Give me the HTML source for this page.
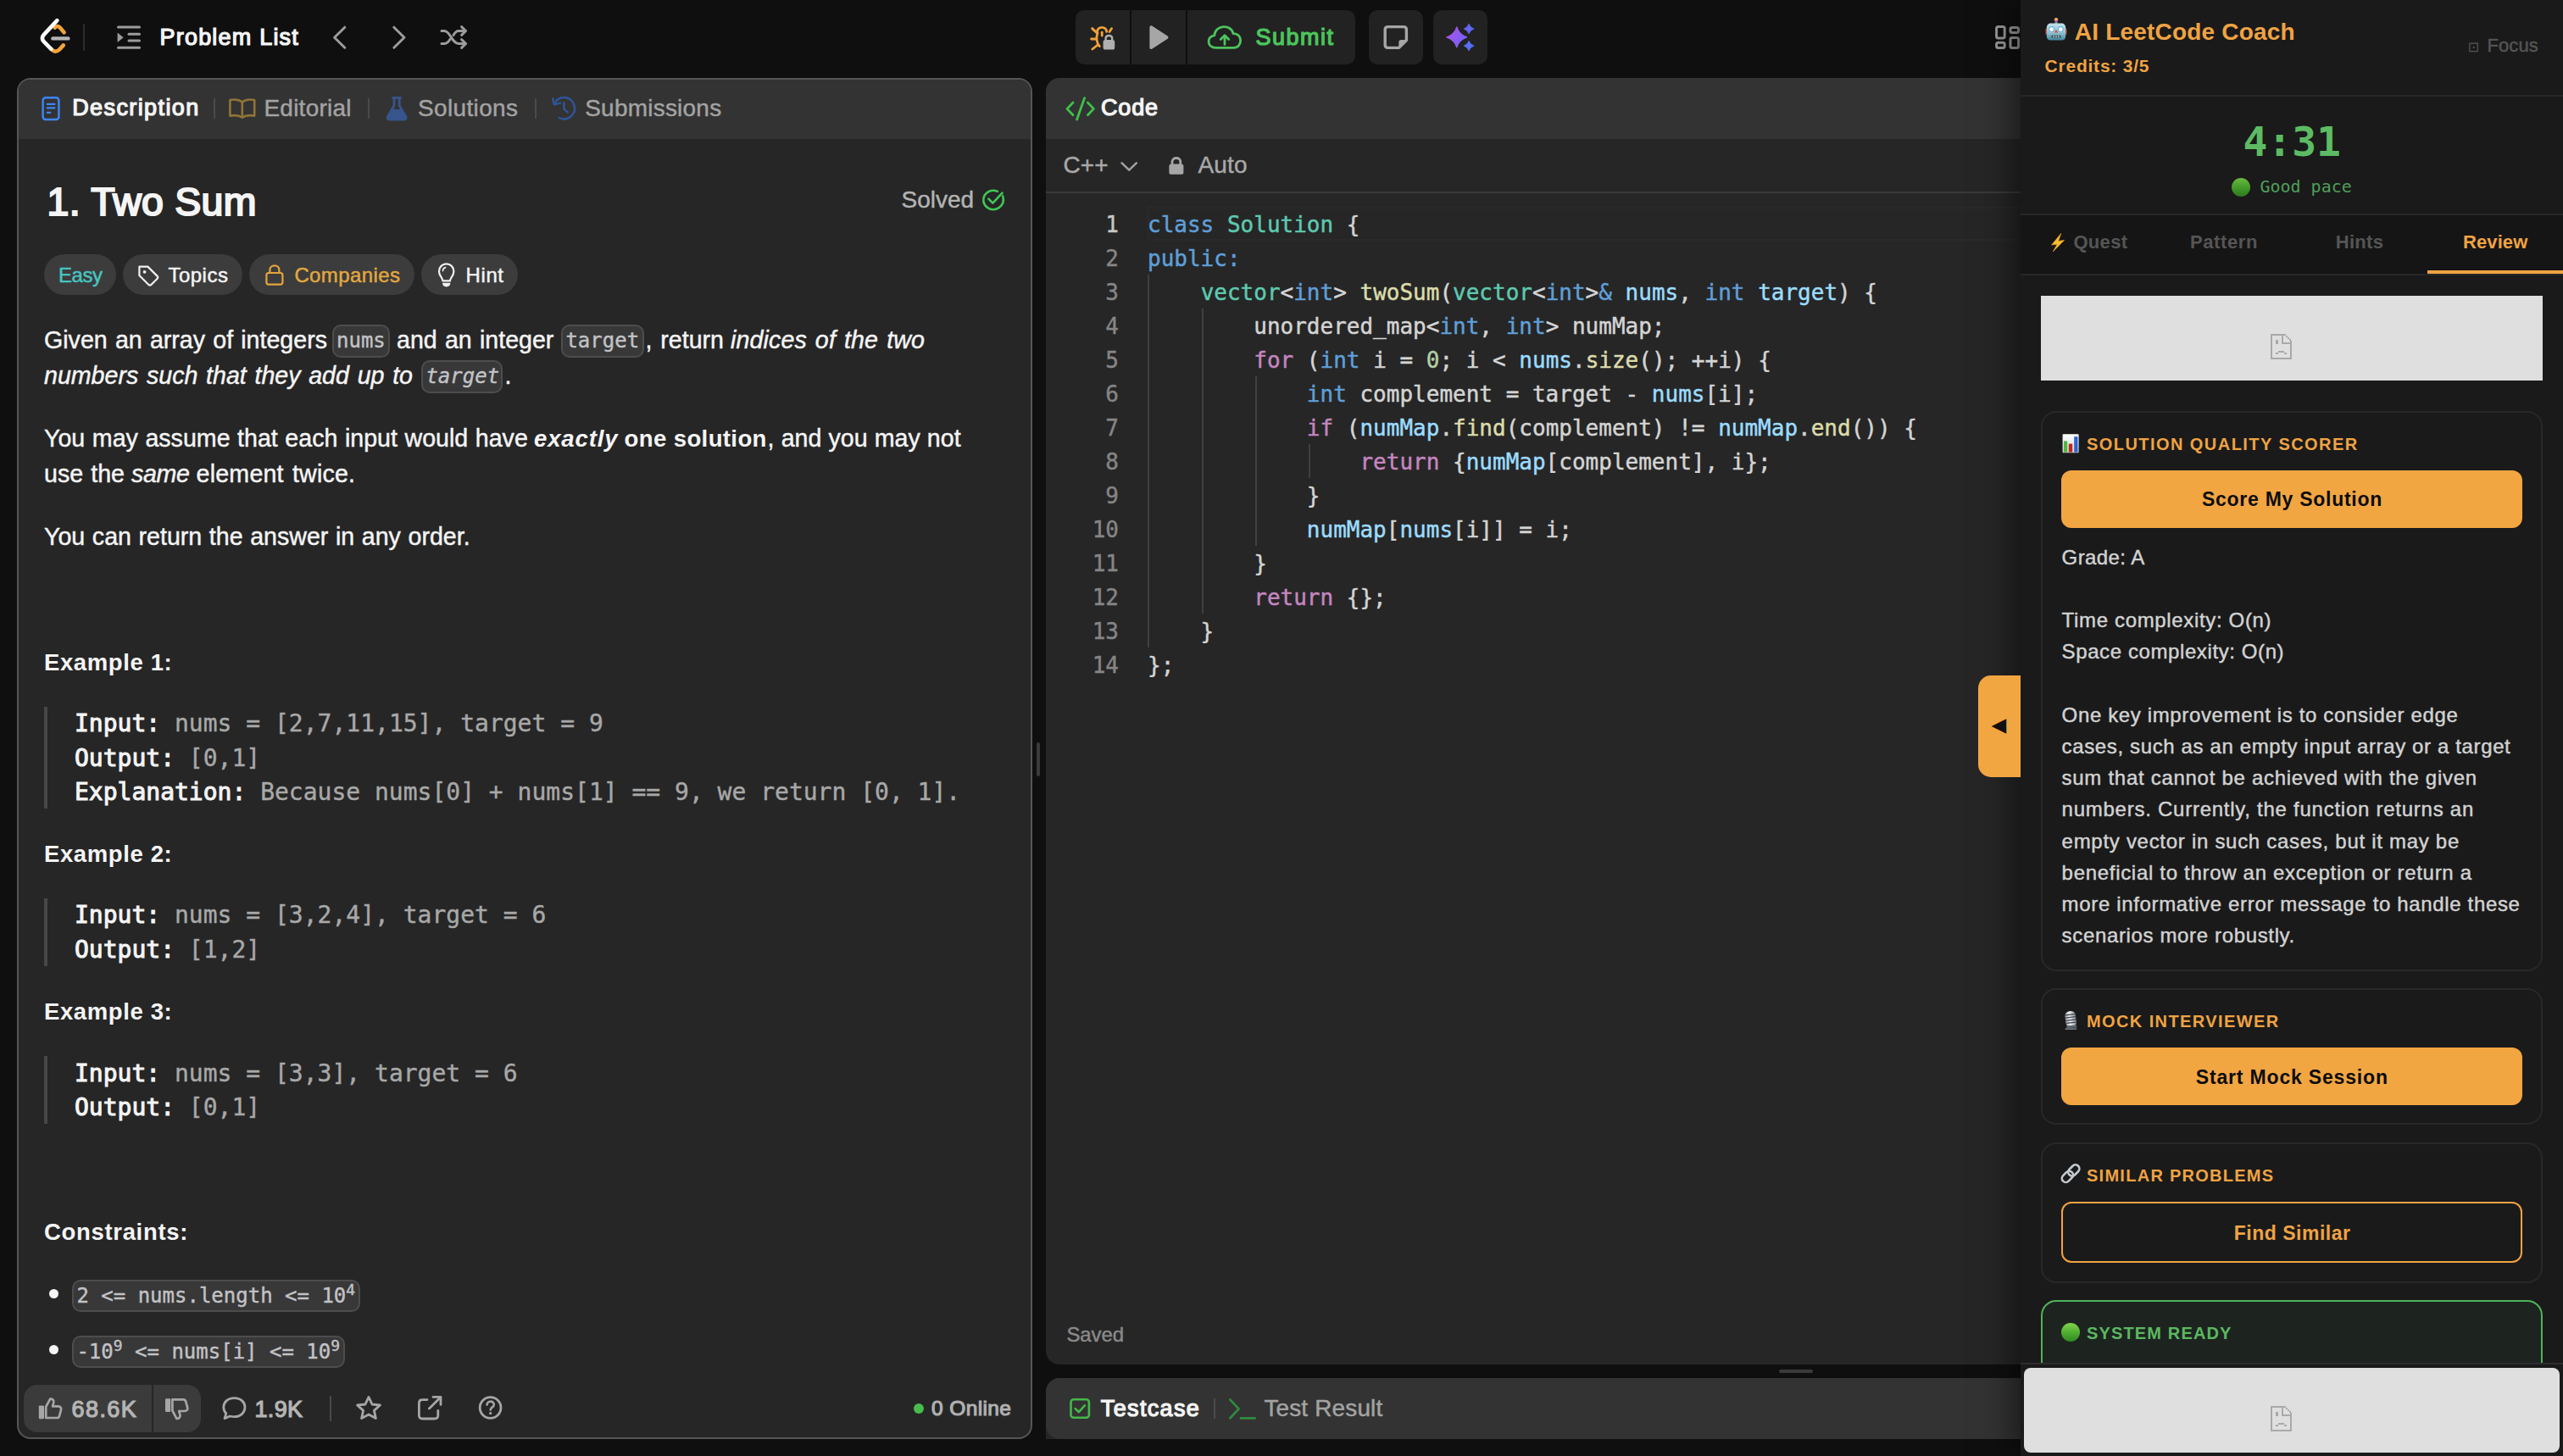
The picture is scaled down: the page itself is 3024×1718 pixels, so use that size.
<!DOCTYPE html>
<html lang="en"><head><meta charset="utf-8"><title>Two Sum - LeetCode</title>
<style>
html,body{margin:0;padding:0;background:#0f0f0f;}
body{width:3024px;height:1718px;position:relative;overflow:hidden;font-family:"Liberation Sans",sans-serif;}
.b{position:absolute;box-sizing:border-box;display:block;}
.t{position:absolute;white-space:pre;line-height:1;margin:0;padding:0;}
.s{font-family:"Liberation Sans",sans-serif;}
.m{font-family:"DejaVu Sans Mono","Liberation Mono",monospace;}
.d{font-family:"DejaVu Sans","Liberation Sans",sans-serif;}
</style></head><body>

<header class="topbar">
<svg class="b" style="left:44px;top:18px;" width="44" height="48" viewBox="44 18 44 48" fill="none">
<path d="M60.3 57.8 Q65.2 63.2 70.2 58.4 L74.8 53.4" stroke="#f2a33a" stroke-width="4.6" stroke-linecap="round"/>
<path d="M64.6 32.6 Q67.6 29.4 70.8 32.6 L75.6 38.2" stroke="#f2a33a" stroke-width="4.6" stroke-linecap="round"/>
<path d="M67.4 24.2 L51.8 40.8 Q48 45 51.8 49.2 L60.3 57.8" stroke="#ffffff" stroke-width="4.6" stroke-linecap="round" stroke-linejoin="round"/>
<path d="M62.4 45.4 H80.4" stroke="#b3b3b3" stroke-width="4.4" stroke-linecap="round"/>
</svg>
<div class="b" style="left:98px;top:28px;width:2px;height:32px;background:#2c2c2c;"></div>
<svg class="b" style="left:136px;top:28px;" width="32" height="32" viewBox="136 28 32 32" fill="none">
<g stroke="#9c9c9c" stroke-width="3" stroke-linecap="round"><path d="M139.5 32H164.5"/><path d="M152 40.3H164.5"/><path d="M152 48.1H164.5"/><path d="M139.5 56.2H164.5"/></g>
<path d="M138.6 38.4 L145.6 44.2 L138.6 50 Z" fill="#9c9c9c"/>
</svg>
<svg class="b" style="left:388px;top:26px;" width="24" height="36" viewBox="388 26 24 36" fill="none"><path d="M406.8 32.2 L394.6 44.2 L406.8 56.2" stroke="#9c9c9c" stroke-width="3" stroke-linecap="round" stroke-linejoin="round"/></svg>
<svg class="b" style="left:458px;top:26px;" width="24" height="36" viewBox="458 26 24 36" fill="none"><path d="M464.8 32.2 L477 44.2 L464.8 56.2" stroke="#9c9c9c" stroke-width="3" stroke-linecap="round" stroke-linejoin="round"/></svg>
<svg class="b" style="left:516px;top:26px;" width="40" height="36" viewBox="516 26 40 36" fill="none"><g stroke="#9c9c9c" stroke-width="3" stroke-linecap="round" stroke-linejoin="round">
<path d="M521 36.5 H524.5 C531 36.5 533.5 51.5 541 51.5 H549"/>
<path d="M521 51.5 H524.5 C528 51.5 529.6 48.6 531 46.4"/>
<path d="M535 41.4 C536.5 38.8 538 36.5 541 36.5 H549"/>
<path d="M544.6 31.6 L549.6 36.5 L544.6 41.4"/><path d="M544.6 46.6 L549.6 51.5 L544.6 56.4"/></g></svg>
<div class="b" style="left:1269px;top:12px;width:64px;height:64px;background:#222222;border-radius:10px 0 0 10px;"></div>
<div class="b" style="left:1335px;top:12px;width:64px;height:64px;background:#222222;"></div>
<div class="b" style="left:1401px;top:12px;width:198px;height:64px;background:#222222;border-radius:0 10px 10px 0;"></div>
<div class="b" style="left:1615px;top:12px;width:64px;height:64px;background:#222222;border-radius:10px;"></div>
<div class="b" style="left:1691px;top:12px;width:64px;height:64px;background:#222222;border-radius:10px;"></div>
<svg class="b" style="left:1284px;top:28px;" width="36" height="34" viewBox="1284 28 36 34" fill="none">
<g stroke="#f2a33a" stroke-width="2.8" stroke-linecap="round" fill="none">
<path d="M1294.6 37.4 C1294.6 30.6 1305.6 30.6 1305.6 37.4"/>
<path d="M1295 39 C1293 44 1293.6 50.6 1297.4 54.6"/>
<path d="M1300.2 38.2 V42"/>
<path d="M1288.6 33.6 L1293.8 38.4"/><path d="M1311.6 33.6 L1309 37.6"/>
<path d="M1287.6 46 H1293.4"/>
<path d="M1288.8 58 L1295.2 53"/>
</g>
<rect x="1301.6" y="47" width="13.6" height="11.6" rx="2.6" fill="#b0b0b0"/>
<path d="M1304.6 47.6 V45.4 C1304.6 40.8 1312.2 40.8 1312.2 45.4 V47.6" stroke="#b0b0b0" stroke-width="2.4" fill="none"/>
</svg>
<svg class="b" style="left:1350px;top:26px;" width="34" height="36" viewBox="1350 26 34 36" fill="none"><path d="M1356.4 32.4 C1356.4 30.6 1358.2 29.8 1359.6 30.8 L1377.6 42.6 C1378.8 43.4 1378.8 45 1377.6 45.8 L1359.6 57.6 C1358.2 58.6 1356.4 57.8 1356.4 56 Z" fill="#a6a6a6"/></svg>
<svg class="b" style="left:1420px;top:26px;" width="50" height="36" viewBox="1420 26 50 36" fill="none"><g stroke="#4cc45c" stroke-width="2.8" stroke-linecap="round" stroke-linejoin="round" fill="none">
<path d="M1434.6 56.4 C1423.6 56.4 1423.4 42.6 1432.8 41.8 C1433.6 29.2 1452.6 28 1455 39.6 C1466.4 39 1466.6 56.4 1455.4 56.4 Z"/>
<path d="M1445 52.4 V42.6"/><path d="M1440.2 46.6 L1445 41.8 L1449.8 46.6"/></g></svg>
<svg class="b" style="left:1628px;top:26px;" width="38" height="36" viewBox="1628 26 38 36" fill="none"><path d="M1637.6 31.6 H1656 C1658 31.6 1659.4 33 1659.4 35 V47.6 L1650.6 56.4 H1637.6 C1635.6 56.4 1634.2 55 1634.2 53 V35 C1634.2 33 1635.6 31.6 1637.6 31.6 Z" stroke="#a6a6a6" stroke-width="3.4" stroke-linejoin="round" fill="none"/>
<path d="M1660.4 47 H1653 C1651.4 47 1650.4 48 1650.4 49.6 V57 Z" fill="#a6a6a6"/></svg>
<svg class="b" style="left:1702px;top:24px;" width="42" height="40" viewBox="1702 24 42 40" fill="none"><defs><linearGradient id="spk" x1="1706" y1="36" x2="1732" y2="52" gradientUnits="userSpaceOnUse"><stop offset="0" stop-color="#b052e8"/><stop offset="0.55" stop-color="#8a5cf0"/><stop offset="1" stop-color="#6a63f5"/></linearGradient><linearGradient id="spk2" x1="1727" y1="0" x2="1739" y2="0" gradientUnits="userSpaceOnUse"><stop offset="0" stop-color="#7a5ef0"/><stop offset="1" stop-color="#4f6df5"/></linearGradient></defs>
<path d="M1718.8 31.6 Q1721.8 40.9 1731.1 43.9 Q1721.8 46.9 1718.8 56.2 Q1715.8 46.9 1706.5 43.9 Q1715.8 40.9 1718.8 31.6 Z" fill="url(#spk)" stroke="url(#spk)" stroke-width="1" stroke-linejoin="round"/>
<path d="M1733.1 28.0 Q1734.5 32.6 1739.1 34.0 Q1734.5 35.4 1733.1 40.0 Q1731.7 35.4 1727.1 34.0 Q1731.7 32.6 1733.1 28.0 Z" fill="url(#spk2)" stroke="url(#spk2)" stroke-width="0.8" stroke-linejoin="round"/>
<path d="M1733.1 48.1 Q1734.5 52.7 1739.1 54.1 Q1734.5 55.5 1733.1 60.1 Q1731.7 55.5 1727.1 54.1 Q1731.7 52.7 1733.1 48.1 Z" fill="#5570f5" stroke="#5570f5" stroke-width="0.8" stroke-linejoin="round"/></svg>
<svg class="b" style="left:2350px;top:26px;" width="40" height="36" viewBox="2350 26 40 36" fill="none"><g stroke="#9c9c9c" stroke-width="3" fill="none"><rect x="2355.6" y="31.6" width="9.6" height="13.4" rx="2"/><rect x="2355.6" y="50.2" width="9.6" height="6.4" rx="2"/><rect x="2372" y="32.4" width="9.6" height="6" rx="2"/><rect x="2372" y="44.6" width="9.6" height="12" rx="2"/></g></svg>
<span id="problist" class="t s" style="left:188.5px;top:30.74px;font-size:27px;color:#f5f5f5;-webkit-text-stroke:1.24px currentColor;letter-spacing:1.203px;">Problem List</span>
<span id="submit" class="t s" style="left:1481.6px;top:30.84px;font-size:27px;color:#4cc45c;-webkit-text-stroke:1.24px currentColor;letter-spacing:1.492px;">Submit</span>
</header>
<main class="panel description">
<div class="b" style="left:20px;top:92px;width:1198px;height:1606px;background:#262626;border-radius:16px;border:2px solid #565656;overflow:hidden;"></div>
<div class="b" style="left:22px;top:94px;width:1194px;height:70px;background:#333333;border-radius:14px 14px 0 0;"></div>
<svg class="b" style="left:48px;top:112px;" width="26" height="32" viewBox="48 112 26 32" fill="none"><rect x="50.6" y="115.2" width="18.8" height="25.8" rx="3.2" stroke="#3d86f6" stroke-width="2.4" fill="none"/>
<g stroke="#3d86f6" stroke-width="2.3" stroke-linecap="round"><path d="M55.8 122.9H64.4"/><path d="M55.8 127.4H64.4"/><path d="M55.8 132.8H59.2"/></g></svg>
<div class="b" style="left:252px;top:116px;width:2px;height:24px;background:#4a4a4a;"></div>
<svg class="b" style="left:268px;top:112px;" width="36" height="32" viewBox="268 112 36 32" fill="none"><g stroke="#8f7438" stroke-width="2.6" stroke-linejoin="round" stroke-linecap="round" fill="none">
<path d="M285.8 120.4 C282 117.4 276 117.2 271.4 118 V136.6 C276 135.8 282 136 285.8 138.6 C289.6 136 295.6 135.8 300.2 136.6 V118 C295.6 117.2 289.6 117.4 285.8 120.4 Z"/><path d="M285.8 120.4 V138.2"/></g></svg>
<div class="b" style="left:434px;top:116px;width:2px;height:24px;background:#4a4a4a;"></div>
<svg class="b" style="left:452px;top:112px;" width="32" height="32" viewBox="452 112 32 32" fill="none"><path d="M463.6 115.4 H472.6 M465 115.4 V124.6 L457.6 137.2 C456.4 139.4 457.6 141 459.8 141 H476.4 C478.6 141 479.8 139.4 478.6 137.2 L471.2 124.6 V115.4" stroke="#37548c" stroke-width="2.8" stroke-linecap="round" stroke-linejoin="round" fill="none"/>
<path d="M462.4 129 L458 137 C457 139 458 140.4 460 140.4 H476.2 C478.2 140.4 479.2 139 478.2 137 L473.8 129 Z" fill="#37548c"/></svg>
<div class="b" style="left:631px;top:116px;width:2px;height:24px;background:#4a4a4a;"></div>
<svg class="b" style="left:648px;top:110px;" width="36" height="36" viewBox="648 110 36 36" fill="none"><g stroke="#2f5598" stroke-width="2.5" stroke-linecap="round" stroke-linejoin="round" fill="none">
<path d="M654.6 122.4 C658 112.6 672.4 112.6 676.8 122.4 C681.6 133.6 670.6 144.4 659.6 139"/>
<path d="M652.2 116.4 L654 123.4 L661 121.6"/>
<path d="M665.4 121.4 V128.6 L669.6 132.2"/></g></svg>
<svg class="b" style="left:1156px;top:220px;" width="32" height="32" viewBox="1156 220 32 32" fill="none"><g stroke="#3fc755" stroke-width="2.6" stroke-linecap="round" stroke-linejoin="round" fill="none">
<path d="M1183.2 231.4 C1186.6 243.4 1173.6 251.6 1164.6 244.6 C1154.6 236.6 1163 220.6 1176.8 225.8"/>
<path d="M1166.4 234.6 L1171.4 239.6 L1182.6 227.6"/></g></svg>
<div class="b" style="left:52px;top:300px;width:85px;height:48px;background:#3c3c3c;border-radius:24px;"></div>
<div class="b" style="left:145px;top:300px;width:141px;height:48px;background:#3c3c3c;border-radius:24px;"></div>
<svg class="b" style="left:160px;top:310px;" width="30" height="30" viewBox="160 310 30 30" fill="none"><path d="M164.4 314.6 H174.4 L185.4 325.6 C186.4 326.6 186.4 328 185.4 329 L178.6 335.8 C177.6 336.8 176.2 336.8 175.2 335.8 L164.4 325 Z" stroke="#f0f0f0" stroke-width="2.2" stroke-linejoin="round" fill="none"/><circle cx="170.6" cy="320.8" r="1.9" fill="#f0f0f0"/></svg>
<div class="b" style="left:294px;top:300px;width:195px;height:48px;background:#3c3c3c;border-radius:24px;"></div>
<svg class="b" style="left:310px;top:308px;" width="28" height="32" viewBox="310 308 28 32" fill="none"><rect x="314.4" y="322" width="19" height="13.6" rx="2.6" stroke="#e3a53a" stroke-width="2.2" fill="none"/><path d="M318.4 321.6 V318.4 C318.4 311.6 329.4 311.6 329.4 318.4 V321.6" stroke="#e3a53a" stroke-width="2.2" fill="none"/></svg>
<div class="b" style="left:497px;top:300px;width:114px;height:48px;background:#3c3c3c;border-radius:24px;"></div>
<svg class="b" style="left:512px;top:306px;" width="30" height="36" viewBox="512 306 30 36" fill="none"><path d="M522.4 331.4 C522.4 327.4 518 325.8 518 320.2 C518 315 521.8 311.4 526.7 311.4 C531.6 311.4 535.4 315 535.4 320.2 C535.4 325.8 531 327.4 531 331.4 Z" stroke="#f0f0f0" stroke-width="2.2" stroke-linejoin="round" fill="none"/><path d="M522 333.8 H531.4 C531.4 336.8 529.4 338.4 526.7 338.4 C524 338.4 522 336.8 522 333.8 Z" fill="#f0f0f0"/><path d="M522.4 319.6 C522.6 317.4 523.8 316 525.6 315.6" stroke="#f0f0f0" stroke-width="1.6" stroke-linecap="round" fill="none"/></svg>
<div class="b" style="left:392px;top:383px;width:68px;height:39px;background:#383838;border-radius:10px;border:2px solid #4d4d4d;"></div>
<div class="b" style="left:662px;top:383px;width:98px;height:39px;background:#383838;border-radius:10px;border:2px solid #4d4d4d;"></div>
<div class="b" style="left:497px;top:425px;width:96px;height:39px;background:#383838;border-radius:10px;border:2px solid #4d4d4d;"></div>
<div class="b" style="left:52px;top:834px;width:4px;height:120px;background:#474747;"></div>
<div class="b" style="left:52px;top:1060px;width:4px;height:80px;background:#474747;"></div>
<div class="b" style="left:52px;top:1246px;width:4px;height:80px;background:#474747;"></div>
<div class="b" style="left:58px;top:1521px;width:11px;height:11px;border-radius:50%;background:#f5f5f5"></div>
<div class="b" style="left:85px;top:1510px;width:340px;height:38px;background:#383838;border-radius:10px;border:2px solid #4d4d4d;"></div>
<div class="b" style="left:58px;top:1587px;width:11px;height:11px;border-radius:50%;background:#f5f5f5"></div>
<div class="b" style="left:85px;top:1576px;width:322px;height:38px;background:#383838;border-radius:10px;border:2px solid #4d4d4d;"></div>
<div class="b" style="left:28px;top:1634px;width:151px;height:56px;background:#3b3b3b;border-radius:16px 0 0 16px;"></div>
<div class="b" style="left:181px;top:1634px;width:56px;height:56px;background:#3b3b3b;border-radius:0 16px 16px 0;"></div>
<svg class="b" style="left:44px;top:1646px;" width="32" height="32" viewBox="0 0 32 32" fill="none"><g transform="translate(1.6,3)"><path d="M8.6 24 V11 L13.6 1.6 C16.8 1.2 18.4 3.6 17.6 6.4 L16.4 10.4 H23 C25.6 10.4 27 12.4 26.4 14.6 L24.4 21.8 C24 23.2 22.8 24 21.4 24 Z" stroke="#a6a6a6" stroke-width="2.7" stroke-linejoin="round" fill="none"/><rect x="0.2" y="9.4" width="6.2" height="15.8" rx="1.2" fill="#a6a6a6"/></g></svg>
<svg class="b" style="left:192px;top:1646px;" width="34" height="32" viewBox="0 0 34 32" fill="none"><g transform="translate(2.8,29.4) scale(1,-1)"><path d="M8.6 24 V11 L13.6 1.6 C16.8 1.2 18.4 3.6 17.6 6.4 L16.4 10.4 H23 C25.6 10.4 27 12.4 26.4 14.6 L24.4 21.8 C24 23.2 22.8 24 21.4 24 Z" stroke="#a6a6a6" stroke-width="2.7" stroke-linejoin="round" fill="none"/><rect x="0.2" y="9.4" width="6.2" height="15.8" rx="1.2" fill="#a6a6a6"/></g></svg>
<svg class="b" style="left:260px;top:1646px;" width="34" height="32" viewBox="260 1646 34 32" fill="none"><path d="M276.4 1649.6 C268.6 1649.6 263.8 1654.6 263.8 1660.6 C263.8 1663.6 265 1666 266.8 1667.8 L265 1673.6 L271.4 1671 C273 1671.4 274.6 1671.6 276.4 1671.6 C284.2 1671.6 289 1666.6 289 1660.6 C289 1654.6 284.2 1649.6 276.4 1649.6 Z" stroke="#a6a6a6" stroke-width="2.8" stroke-linejoin="round" fill="none"/></svg>
<div class="b" style="left:389px;top:1647px;width:2px;height:30px;background:#4a4a4a;"></div>
<svg class="b" style="left:418px;top:1644px;" width="34" height="34" viewBox="418 1644 34 34" fill="none"><path d="M435 1648.4 L439 1657 L448.4 1658 L441.4 1664.4 L443.4 1673.6 L435 1669 L426.6 1673.6 L428.6 1664.4 L421.6 1658 L431 1657 Z" stroke="#a6a6a6" stroke-width="2.8" stroke-linejoin="round" fill="none"/></svg>
<svg class="b" style="left:490px;top:1644px;" width="34" height="34" viewBox="490 1644 34 34" fill="none"><g stroke="#a6a6a6" stroke-width="2.8" stroke-linecap="round" stroke-linejoin="round" fill="none"><path d="M504 1651.6 H498.4 C496 1651.6 494.4 1653.2 494.4 1655.6 V1670 C494.4 1672.4 496 1674 498.4 1674 H512.8 C515.2 1674 516.8 1672.4 516.8 1670 V1664.4"/><path d="M511 1648.4 H520 V1657.4"/><path d="M519.4 1649 L506.4 1662"/></g></svg>
<svg class="b" style="left:562px;top:1644px;" width="34" height="34" viewBox="562 1644 34 34" fill="none"><circle cx="578.6" cy="1661" r="12.4" stroke="#a6a6a6" stroke-width="2.8" fill="none"/>
<path d="M574.6 1657.6 C574.6 1652.4 582.8 1652.4 582.8 1657.4 C582.8 1660.4 578.7 1660.4 578.7 1663.6" stroke="#a6a6a6" stroke-width="2.6" stroke-linecap="round" fill="none"/><circle cx="578.7" cy="1667.6" r="1.7" fill="#a6a6a6"/></svg>
<div class="b" style="left:1078px;top:1656px;width:12px;height:12px;border-radius:50%;background:#47bd4c"></div>
<div class="b" style="left:1223px;top:876px;width:4px;height:40px;background:#3a3a3a;border-radius:2px;"></div>
<span id="tab_desc" class="t s" style="left:85.2px;top:114.34px;font-size:27px;color:#f5f5f5;-webkit-text-stroke:1.24px currentColor;letter-spacing:1.403px;">Description</span>
<span id="tab_edit" class="t s" style="left:311.4px;top:113.50px;font-size:28px;color:#a3a3a3;-webkit-text-stroke:0.45px currentColor;letter-spacing:0.248px;">Editorial</span>
<span id="tab_sol" class="t s" style="left:493px;top:113.50px;font-size:28px;color:#a3a3a3;-webkit-text-stroke:0.45px currentColor;letter-spacing:0.357px;">Solutions</span>
<span id="tab_sub" class="t s" style="left:690.2px;top:113.50px;font-size:28px;color:#a3a3a3;-webkit-text-stroke:0.45px currentColor;letter-spacing:0.224px;">Submissions</span>
<span id="title" class="t s" style="left:55.6px;top:215.04px;font-size:46.5px;color:#f5f5f5;-webkit-text-stroke:2.14px currentColor;letter-spacing:0.233px;">1. Two Sum</span>
<span id="solved" class="t s" style="left:1063.6px;top:222.10px;font-size:28px;color:#b3b3b3;-webkit-text-stroke:0.45px currentColor;letter-spacing:-0.037px;">Solved</span>
<span id="easy" class="t s" style="left:69px;top:312.68px;font-size:24px;color:#46c6c2;-webkit-text-stroke:0.45px currentColor;letter-spacing:-0.490px;">Easy</span>
<span id="topics" class="t s" style="left:198.4px;top:312.68px;font-size:24px;color:#f5f5f5;-webkit-text-stroke:0.45px currentColor;letter-spacing:0.495px;">Topics</span>
<span id="companies" class="t s" style="left:347.4px;top:312.68px;font-size:24px;color:#e3a840;-webkit-text-stroke:0.45px currentColor;letter-spacing:0.399px;">Companies</span>
<span id="hint" class="t s" style="left:549.6px;top:312.68px;font-size:24px;color:#f5f5f5;-webkit-text-stroke:0.45px currentColor;letter-spacing:0.578px;">Hint</span>
<span id="p1a" class="t s" style="left:52px;top:386.99px;font-size:28.6px;color:#f5f5f5;-webkit-text-stroke:0.45px currentColor;word-spacing:1.250px;">Given an array of integers</span>
<span id="p1nums" class="t m" style="left:397px;top:389.70px;font-size:24px;color:#c2c2c6;-webkit-text-stroke:0.4px currentColor;">nums</span>
<span id="p1b" class="t s" style="left:468px;top:386.99px;font-size:28.6px;color:#f5f5f5;-webkit-text-stroke:0.45px currentColor;word-spacing:1.278px;">and an integer</span>
<span id="p1tgt" class="t m" style="left:667.4px;top:389.70px;font-size:24px;color:#c2c2c6;-webkit-text-stroke:0.4px currentColor;">target</span>
<span id="p1c" class="t s" style="left:761.6px;top:386.99px;font-size:28.6px;color:#f5f5f5;-webkit-text-stroke:0.45px currentColor;word-spacing:1.806px;">, return</span>
<span id="p1d" class="t s" style="left:862px;top:386.99px;font-size:28.6px;color:#f5f5f5;-webkit-text-stroke:0.45px currentColor;font-style:italic;word-spacing:2.000px;letter-spacing:0.115px;">indices of the two</span>
<span id="p1e" class="t s" style="left:52px;top:428.99px;font-size:28.6px;color:#f5f5f5;-webkit-text-stroke:0.45px currentColor;font-style:italic;word-spacing:1.763px;">numbers such that they add up to</span>
<span id="p1tgt2" class="t m" style="left:502.4px;top:431.70px;font-size:24px;color:#c2c2c6;font-style:italic;-webkit-text-stroke:0.4px currentColor;">target</span>
<span id="p1f" class="t s" style="left:595.6px;top:428.99px;font-size:28.6px;color:#f5f5f5;-webkit-text-stroke:0.45px currentColor;">.</span>
<span id="p2a" class="t s" style="left:52px;top:503.19px;font-size:28.6px;color:#f5f5f5;-webkit-text-stroke:0.45px currentColor;word-spacing:0.625px;">You may assume that each input would have</span>
<span id="p2b" class="t s" style="left:630px;top:504.04px;font-size:27.6px;color:#f5f5f5;font-weight:700;font-style:italic;letter-spacing:0.829px;">exactly</span>
<span id="p2c" class="t s" style="left:736.6px;top:504.04px;font-size:27.6px;color:#f5f5f5;font-weight:700;letter-spacing:0.349px;">one solution</span>
<span id="p2d" class="t s" style="left:905.6px;top:503.19px;font-size:28.6px;color:#f5f5f5;-webkit-text-stroke:0.45px currentColor;word-spacing:0.172px;">, and you may not</span>
<span id="p2e" class="t s" style="left:52px;top:545.19px;font-size:28.6px;color:#f5f5f5;-webkit-text-stroke:0.45px currentColor;word-spacing:1.203px;">use the</span>
<span id="p2f" class="t s" style="left:155px;top:545.19px;font-size:28.6px;color:#f5f5f5;-webkit-text-stroke:0.45px currentColor;font-style:italic;letter-spacing:-0.330px;">same</span>
<span id="p2g" class="t s" style="left:231.6px;top:545.19px;font-size:28.6px;color:#f5f5f5;-webkit-text-stroke:0.45px currentColor;word-spacing:2.000px;letter-spacing:0.202px;">element twice.</span>
<span id="p3" class="t s" style="left:52px;top:619.39px;font-size:28.6px;color:#f5f5f5;-webkit-text-stroke:0.45px currentColor;word-spacing:0.648px;">You can return the answer in any order.</span>
<span id="ex1" class="t s" style="left:52px;top:767.92px;font-size:27.5px;color:#f5f5f5;font-weight:700;letter-spacing:0.618px;">Example 1:</span>
<span id="ex1l0" class="t m" style="left:88px;top:840.31px;font-size:28px;color:#a8a8a8;-webkit-text-stroke:0.4px currentColor;"><span style="color:#f5f5f5;-webkit-text-stroke:1px #f5f5f5">Input:</span> nums = [2,7,11,15], target = 9</span>
<span id="ex1l1" class="t m" style="left:88px;top:880.51px;font-size:28px;color:#a8a8a8;-webkit-text-stroke:0.4px currentColor;"><span style="color:#f5f5f5;-webkit-text-stroke:1px #f5f5f5">Output:</span> [0,1]</span>
<span id="ex1l2" class="t m" style="left:88px;top:920.51px;font-size:28px;color:#a8a8a8;-webkit-text-stroke:0.4px currentColor;"><span style="color:#f5f5f5;-webkit-text-stroke:1px #f5f5f5">Explanation:</span> Because nums[0] + nums[1] == 9, we return [0, 1].</span>
<span id="ex2" class="t s" style="left:52px;top:993.92px;font-size:27.5px;color:#f5f5f5;font-weight:700;letter-spacing:0.618px;">Example 2:</span>
<span id="ex2l0" class="t m" style="left:88px;top:1066.31px;font-size:28px;color:#a8a8a8;-webkit-text-stroke:0.4px currentColor;"><span style="color:#f5f5f5;-webkit-text-stroke:1px #f5f5f5">Input:</span> nums = [3,2,4], target = 6</span>
<span id="ex2l1" class="t m" style="left:88px;top:1106.51px;font-size:28px;color:#a8a8a8;-webkit-text-stroke:0.4px currentColor;"><span style="color:#f5f5f5;-webkit-text-stroke:1px #f5f5f5">Output:</span> [1,2]</span>
<span id="ex3" class="t s" style="left:52px;top:1180.32px;font-size:27.5px;color:#f5f5f5;font-weight:700;letter-spacing:0.618px;">Example 3:</span>
<span id="ex3l0" class="t m" style="left:88px;top:1252.51px;font-size:28px;color:#a8a8a8;-webkit-text-stroke:0.4px currentColor;"><span style="color:#f5f5f5;-webkit-text-stroke:1px #f5f5f5">Input:</span> nums = [3,3], target = 6</span>
<span id="ex3l1" class="t m" style="left:88px;top:1292.71px;font-size:28px;color:#a8a8a8;-webkit-text-stroke:0.4px currentColor;"><span style="color:#f5f5f5;-webkit-text-stroke:1px #f5f5f5">Output:</span> [0,1]</span>
<span id="constr" class="t s" style="left:52px;top:1440.32px;font-size:27.5px;color:#f5f5f5;font-weight:700;letter-spacing:0.671px;">Constraints:</span>
<span id="c1" class="t m" style="left:90.4px;top:1517.10px;font-size:24px;color:#c2c2c6;-webkit-text-stroke:0.4px currentColor;">2 &lt;= nums.length &lt;= 10<span style="font-size:18px;position:relative;top:-9px">4</span></span>
<span id="c2" class="t m" style="left:90.4px;top:1583.10px;font-size:24px;color:#c2c2c6;-webkit-text-stroke:0.4px currentColor;">-10<span style="font-size:18px;position:relative;top:-9px">9</span> &lt;= nums[i] &lt;= 10<span style="font-size:18px;position:relative;top:-9px">9</span></span>
<span id="likes" class="t s" style="left:84.6px;top:1649.54px;font-size:27px;color:#b4b4b4;-webkit-text-stroke:1.24px currentColor;letter-spacing:1.407px;">68.6K</span>
<span id="comments" class="t s" style="left:300.6px;top:1649.54px;font-size:27px;color:#b4b4b4;-webkit-text-stroke:1.24px currentColor;letter-spacing:0.263px;">1.9K</span>
<span id="online" class="t s" style="left:1099px;top:1650.46px;font-size:24.5px;color:#b0b0b0;-webkit-text-stroke:1.13px currentColor;letter-spacing:0.392px;">0 Online</span>
</main>
<section class="panel code">
<div class="b" style="left:1234px;top:92px;width:1770px;height:1518px;background:#262626;border-radius:16px;overflow:hidden;"></div>
<div class="b" style="left:1234px;top:92px;width:1770px;height:72px;background:#333333;border-radius:16px 16px 0 0;"></div>
<svg class="b" style="left:1254px;top:110px;" width="42" height="36" viewBox="1254 110 42 36" fill="none"><g stroke="#3cc24a" stroke-width="2.8" stroke-linecap="round" stroke-linejoin="round" fill="none">
<path d="M1266 121 L1259 128.4 L1266 135.8"/><path d="M1283.4 121 L1290.4 128.4 L1283.4 135.8"/><path d="M1279.6 115.6 L1270.6 141"/></g></svg>
<svg class="b" style="left:1318px;top:186px;" width="28" height="20" viewBox="1318 186 28 20" fill="none"><path d="M1323.6 192.4 L1332.2 200.6 L1340.8 192.4" stroke="#a0a0a0" stroke-width="2.6" stroke-linecap="round" stroke-linejoin="round" fill="none"/></svg>
<svg class="b" style="left:1376px;top:182px;" width="24" height="26" viewBox="1376 182 24 26" fill="none"><rect x="1379.4" y="193.4" width="17" height="12.4" rx="2.6" fill="#a6a6a6"/><path d="M1383 194 V191 C1383 185 1392.8 185 1392.8 191 V194" stroke="#a6a6a6" stroke-width="2.8" fill="none"/></svg>
<div class="b" style="left:1234px;top:226px;width:1770px;height:2px;background:#3a3a3a;"></div>
<div class="b" style="left:1354px;top:244px;width:1650px;height:40px;background:transparent;border:2px solid #2a2a2a;"></div>
<div class="b" style="left:1354px;top:324px;width:2px;height:440px;background:#404040;"></div>
<div class="b" style="left:1418px;top:364px;width:2px;height:360px;background:#404040;"></div>
<div class="b" style="left:1481px;top:444px;width:2px;height:200px;background:#404040;"></div>
<div class="b" style="left:1544px;top:524px;width:2px;height:40px;background:#404040;"></div>
<div class="b" style="left:2099px;top:1616px;width:40px;height:4px;background:#3a3a3a;border-radius:2px;"></div>
<span id="code_h" class="t s" style="left:1299px;top:114.34px;font-size:27px;color:#f5f5f5;-webkit-text-stroke:1.24px currentColor;letter-spacing:0.863px;">Code</span>
<span id="cpp" class="t s" style="left:1254.6px;top:181.30px;font-size:28px;color:#a8a8a8;-webkit-text-stroke:0.45px currentColor;letter-spacing:0.021px;">C++</span>
<span id="auto" class="t s" style="left:1413.4px;top:181.30px;font-size:28px;color:#a8a8a8;-webkit-text-stroke:0.45px currentColor;letter-spacing:0.198px;">Auto</span>
<span id="ln0" class="t m" style="left:1304.35px;top:251.60px;font-size:26px;color:#c6c6c6;-webkit-text-stroke:0.4px currentColor;">1</span>
<span id="cd0" class="t m" style="left:1354px;top:251.60px;font-size:26px;color:#d4d4d4;-webkit-text-stroke:0.45px currentColor;"><span style="color:#5f9fd8">class</span> <span style="color:#5ec9b0">Solution</span> {</span>
<span id="ln1" class="t m" style="left:1304.35px;top:291.60px;font-size:26px;color:#858585;-webkit-text-stroke:0.4px currentColor;">2</span>
<span id="cd1" class="t m" style="left:1354px;top:291.60px;font-size:26px;color:#d4d4d4;-webkit-text-stroke:0.45px currentColor;"><span style="color:#5f9fd8">public:</span></span>
<span id="ln2" class="t m" style="left:1304.35px;top:331.60px;font-size:26px;color:#858585;-webkit-text-stroke:0.4px currentColor;">3</span>
<span id="cd2" class="t m" style="left:1354px;top:331.60px;font-size:26px;color:#d4d4d4;-webkit-text-stroke:0.45px currentColor;">    <span style="color:#5ec9b0">vector</span>&lt;<span style="color:#5f9fd8">int</span>&gt; <span style="color:#dcdcaa">twoSum</span>(<span style="color:#5ec9b0">vector</span>&lt;<span style="color:#5f9fd8">int</span>&gt;<span style="color:#5f9fd8">&amp;</span> <span style="color:#9cdcfe">nums</span>, <span style="color:#5f9fd8">int</span> <span style="color:#9cdcfe">target</span>) {</span>
<span id="ln3" class="t m" style="left:1304.35px;top:371.60px;font-size:26px;color:#858585;-webkit-text-stroke:0.4px currentColor;">4</span>
<span id="cd3" class="t m" style="left:1354px;top:371.60px;font-size:26px;color:#d4d4d4;-webkit-text-stroke:0.45px currentColor;">        unordered_map&lt;<span style="color:#5f9fd8">int</span>, <span style="color:#5f9fd8">int</span>&gt; numMap;</span>
<span id="ln4" class="t m" style="left:1304.35px;top:411.60px;font-size:26px;color:#858585;-webkit-text-stroke:0.4px currentColor;">5</span>
<span id="cd4" class="t m" style="left:1354px;top:411.60px;font-size:26px;color:#d4d4d4;-webkit-text-stroke:0.45px currentColor;">        <span style="color:#c586c0">for</span> (<span style="color:#5f9fd8">int</span> i = <span style="color:#b5cea8">0</span>; i &lt; <span style="color:#9cdcfe">nums</span>.<span style="color:#dcdcaa">size</span>(); ++i) {</span>
<span id="ln5" class="t m" style="left:1304.35px;top:451.60px;font-size:26px;color:#858585;-webkit-text-stroke:0.4px currentColor;">6</span>
<span id="cd5" class="t m" style="left:1354px;top:451.60px;font-size:26px;color:#d4d4d4;-webkit-text-stroke:0.45px currentColor;">            <span style="color:#5f9fd8">int</span> complement = target - <span style="color:#9cdcfe">nums</span>[i];</span>
<span id="ln6" class="t m" style="left:1304.35px;top:491.60px;font-size:26px;color:#858585;-webkit-text-stroke:0.4px currentColor;">7</span>
<span id="cd6" class="t m" style="left:1354px;top:491.60px;font-size:26px;color:#d4d4d4;-webkit-text-stroke:0.45px currentColor;">            <span style="color:#c586c0">if</span> (<span style="color:#9cdcfe">numMap</span>.<span style="color:#dcdcaa">find</span>(complement) != <span style="color:#9cdcfe">numMap</span>.<span style="color:#dcdcaa">end</span>()) {</span>
<span id="ln7" class="t m" style="left:1304.35px;top:531.60px;font-size:26px;color:#858585;-webkit-text-stroke:0.4px currentColor;">8</span>
<span id="cd7" class="t m" style="left:1354px;top:531.60px;font-size:26px;color:#d4d4d4;-webkit-text-stroke:0.45px currentColor;">                <span style="color:#c586c0">return</span> {<span style="color:#9cdcfe">numMap</span>[complement], i};</span>
<span id="ln8" class="t m" style="left:1304.35px;top:571.60px;font-size:26px;color:#858585;-webkit-text-stroke:0.4px currentColor;">9</span>
<span id="cd8" class="t m" style="left:1354px;top:571.60px;font-size:26px;color:#d4d4d4;-webkit-text-stroke:0.45px currentColor;">            }</span>
<span id="ln9" class="t m" style="left:1288.7px;top:611.60px;font-size:26px;color:#858585;-webkit-text-stroke:0.4px currentColor;">10</span>
<span id="cd9" class="t m" style="left:1354px;top:611.60px;font-size:26px;color:#d4d4d4;-webkit-text-stroke:0.45px currentColor;">            <span style="color:#9cdcfe">numMap</span>[<span style="color:#9cdcfe">nums</span>[i]] = i;</span>
<span id="ln10" class="t m" style="left:1288.7px;top:651.60px;font-size:26px;color:#858585;-webkit-text-stroke:0.4px currentColor;">11</span>
<span id="cd10" class="t m" style="left:1354px;top:651.60px;font-size:26px;color:#d4d4d4;-webkit-text-stroke:0.45px currentColor;">        }</span>
<span id="ln11" class="t m" style="left:1288.7px;top:691.60px;font-size:26px;color:#858585;-webkit-text-stroke:0.4px currentColor;">12</span>
<span id="cd11" class="t m" style="left:1354px;top:691.60px;font-size:26px;color:#d4d4d4;-webkit-text-stroke:0.45px currentColor;">        <span style="color:#c586c0">return</span> {};</span>
<span id="ln12" class="t m" style="left:1288.7px;top:731.60px;font-size:26px;color:#858585;-webkit-text-stroke:0.4px currentColor;">13</span>
<span id="cd12" class="t m" style="left:1354px;top:731.60px;font-size:26px;color:#d4d4d4;-webkit-text-stroke:0.45px currentColor;">    }</span>
<span id="ln13" class="t m" style="left:1288.7px;top:771.60px;font-size:26px;color:#858585;-webkit-text-stroke:0.4px currentColor;">14</span>
<span id="cd13" class="t m" style="left:1354px;top:771.60px;font-size:26px;color:#d4d4d4;-webkit-text-stroke:0.45px currentColor;">};</span>
<span id="saved" class="t s" style="left:1258.4px;top:1563.08px;font-size:24px;color:#8a8a8a;-webkit-text-stroke:0.45px currentColor;letter-spacing:-0.093px;">Saved</span>
</section>
<section class="panel testcase">
<div class="b" style="left:1234px;top:1626px;width:1770px;height:72px;background:#262626;border-radius:16px 16px 0 0;"></div>
<div class="b" style="left:1234px;top:1626px;width:1770px;height:72px;background:#333333;border-radius:16px;"></div>
<svg class="b" style="left:1258px;top:1644px;" width="32" height="34" viewBox="1258 1644 32 34" fill="none"><rect x="1263.5" y="1651.3" width="21.4" height="21.4" rx="3.2" stroke="#45b84a" stroke-width="2.6" fill="none"/><path d="M1268.8 1662.2 L1272.8 1666.2 L1279.8 1658.4" stroke="#45b84a" stroke-width="2.6" stroke-linecap="round" stroke-linejoin="round" fill="none"/></svg>
<div class="b" style="left:1432px;top:1650px;width:2px;height:24px;background:#4a4a4a;"></div>
<svg class="b" style="left:1446px;top:1646px;" width="40" height="32" viewBox="1446 1646 40 32" fill="none"><g stroke="#2f8a3e" stroke-width="2.8" stroke-linecap="round" stroke-linejoin="round" fill="none"><path d="M1451.4 1651.6 L1461.6 1662.4 L1451.4 1673.2"/><path d="M1464 1673.4 H1480.6"/></g></svg>
<span id="testcase" class="t s" style="left:1298.8px;top:1648.54px;font-size:27px;color:#f5f5f5;-webkit-text-stroke:1.24px currentColor;letter-spacing:1.355px;">Testcase</span>
<span id="testres" class="t s" style="left:1491.4px;top:1647.70px;font-size:28px;color:#a3a3a3;-webkit-text-stroke:0.45px currentColor;letter-spacing:0.136px;">Test Result</span>
</section>
<aside class="coach">
<div class="b" style="left:2384px;top:0px;width:640px;height:1718px;background:#1a1a1a;box-shadow:-8px 0 40px rgba(0,0,0,0.55);"></div>
<div class="b" style="left:2334px;top:797px;width:50px;height:120px;background:#f2a641;border-radius:15px 0 0 15px;"></div>
<svg class="b" style="left:2410px;top:18px;" width="32" height="32" viewBox="2410 18 32 32" fill="none">
<defs><linearGradient id="rb" x1="0" y1="27" x2="0" y2="48" gradientUnits="userSpaceOnUse"><stop offset="0" stop-color="#c4e3ec"/><stop offset="0.55" stop-color="#8fc3d3"/><stop offset="1" stop-color="#3f7f96"/></linearGradient></defs>
<rect x="2424.6" y="24.4" width="2.8" height="4.4" fill="#8d979e"/>
<circle cx="2426" cy="23.6" r="2.5" fill="#8a3fb5"/><circle cx="2426" cy="22.8" r="1.9" fill="#f3b73a"/>
<rect x="2413.4" y="33.4" width="3.4" height="7.6" rx="1.4" fill="#c24238"/><rect x="2435.2" y="33.4" width="3.4" height="7.6" rx="1.4" fill="#c24238"/>
<rect x="2414.8" y="27.6" width="22.4" height="20" rx="4.6" fill="url(#rb)"/>
<circle cx="2420.6" cy="34.6" r="3.5" fill="#6fb4d6"/><circle cx="2431.4" cy="34.6" r="3.5" fill="#6fb4d6"/>
<circle cx="2420.6" cy="34.6" r="2.3" fill="#ffffff"/><circle cx="2431.4" cy="34.6" r="2.3" fill="#ffffff"/>
<path d="M2426 34.8 L2428 38.6 H2424 Z" fill="#e0463a"/>
<rect x="2420.4" y="41.8" width="11.2" height="2.8" rx="0.8" fill="#2f4a55"/>
<path d="M2422.4 43.2 h1.4 M2425.3 43.2 h1.4 M2428.2 43.2 h1.4" stroke="#e8eef0" stroke-width="1.4"/>
</svg>
<div class="b" style="left:2384px;top:112px;width:640px;height:2px;background:#272727;"></div>
<div class="b" style="left:2633px;top:210px;width:22px;height:22px;border-radius:50%;background:linear-gradient(180deg,#6cba40 0%,#489e2c 45%,#2c7a1c 100%);"></div>
<div class="b" style="left:2384px;top:254px;width:640px;height:70px;background:#151515;"></div>
<div class="b" style="left:2384px;top:252px;width:640px;height:2px;background:#272727;"></div>
<svg class="b" style="left:2416px;top:272px;" width="24" height="30" viewBox="2416 272 24 30" fill="none"><path d="M2431.8 275.4 L2420.6 289 L2427.2 288.2 L2422.2 297 L2435.6 283.4 L2428.6 284.4 Z" fill="#f7bd33" stroke="#e39a22" stroke-width="0.7" stroke-linejoin="round"/></svg>
<div class="b" style="left:2384px;top:323px;width:640px;height:2px;background:#272727;"></div>
<div class="b" style="left:2864px;top:319px;width:160px;height:4px;background:#f0a343;"></div>
<div class="b" style="left:2408px;top:349px;width:592px;height:100px;background:#dfdfdf;"></div>
<svg class="b" style="left:2679px;top:394px;" width="26" height="30" viewBox="0 0 26 30" fill="none"><g fill="#a9a9a9" shape-rendering="crispEdges"><rect x="0" y="0" width="2" height="30"/><rect x="0" y="0" width="18" height="2"/><rect x="0" y="28" width="25" height="2"/><rect x="23" y="8" width="2" height="22"/><rect x="13" y="0" width="2" height="12"/><rect x="13" y="10" width="12" height="2"/><rect x="18" y="2" width="2" height="2"/><rect x="20" y="4" width="2" height="2"/><rect x="22" y="6" width="2" height="2"/><rect x="6" y="7" width="3" height="5"/><rect x="9" y="20" width="7" height="2"/><rect x="6" y="22" width="3" height="2"/><rect x="16" y="22" width="3" height="2"/></g></svg>
<div class="b" style="left:2408px;top:485px;width:592px;height:661px;background:#1a1a1a;border-radius:18px;border:2px solid #282828;"></div>
<svg class="b" style="left:2432px;top:510px;" width="22" height="26" viewBox="2432 510 22 26" fill="none"><defs><linearGradient id="chbg" x1="0" y1="512" x2="0" y2="534" gradientUnits="userSpaceOnUse"><stop offset="0" stop-color="#ffffff"/><stop offset="1" stop-color="#cfd6dc"/></linearGradient></defs>
<rect x="2433.6" y="512.2" width="19" height="22" rx="0.8" fill="url(#chbg)"/>
<rect x="2435" y="520.4" width="4.2" height="13.2" fill="#4fb83c"/><rect x="2440.8" y="523.6" width="4.4" height="10" fill="#c3261c"/><rect x="2447.2" y="515.2" width="4.3" height="18.4" fill="#2f63cf"/></svg>
<div class="b" style="left:2432px;top:555px;width:544px;height:68px;background:#f2a641;border-radius:12px;"></div>
<div class="b" style="left:2408px;top:1166px;width:592px;height:161px;background:#1a1a1a;border-radius:18px;border:2px solid #282828;"></div>
<svg class="b" style="left:2432px;top:1190px;" width="22" height="28" viewBox="2432 1190 22 28" fill="none"><defs><linearGradient id="mic" x1="2436" y1="0" x2="2450" y2="0" gradientUnits="userSpaceOnUse"><stop offset="0" stop-color="#8b9197"/><stop offset="0.45" stop-color="#eef1f4"/><stop offset="1" stop-color="#7d848b"/></linearGradient></defs>
<g transform="rotate(-7 2443 1203)"><rect x="2437" y="1193" width="12.4" height="19" rx="5.4" fill="url(#mic)"/>
<path d="M2437.6 1197.2 H2448.8 M2437.2 1200.4 H2449.2 M2437.2 1203.6 H2449.2 M2437.6 1206.8 H2448.8" stroke="#3d4348" stroke-width="1.3"/></g>
<path d="M2438 1210.6 L2450 1209.4 L2450.6 1212.4 L2438.4 1213.4 Z" fill="#5a6168"/>
<rect x="2436.4" y="1213.2" width="14" height="1.8" rx="0.9" fill="#6f767d"/></svg>
<div class="b" style="left:2432px;top:1236px;width:544px;height:68px;background:#f2a641;border-radius:12px;"></div>
<div class="b" style="left:2408px;top:1348px;width:592px;height:166px;background:#1a1a1a;border-radius:18px;border:2px solid #282828;"></div>
<svg class="b" style="left:2430px;top:1372px;" width="26" height="26" viewBox="2430 1372 26 26" fill="none"><g stroke="#c4cacf" stroke-width="2.6" fill="none"><rect x="-4.6" y="-7.4" width="9.2" height="14.8" rx="4.6" transform="translate(2446.8,1381) rotate(45)"/><rect x="-4.6" y="-7.4" width="9.2" height="14.8" rx="4.6" transform="translate(2439.4,1388.4) rotate(45)"/></g></svg>
<div class="b" style="left:2432px;top:1418px;width:544px;height:72px;background:transparent;border-radius:12px;border:2px solid #f0a343;"></div>
<div class="b" style="left:2408px;top:1534px;width:592px;height:200px;background:#1d2420;border-radius:18px;border:2px solid #4fb35a;"></div>
<div class="b" style="left:2432px;top:1561px;width:22px;height:22px;border-radius:50%;background:linear-gradient(180deg,#84d44c 0%,#55b234 45%,#2f8a20 100%);"></div>
<div class="b" style="left:2384px;top:1608px;width:640px;height:110px;background:#1a1a1a;border-top:2px solid #2e2e2e;"></div>
<div class="b" style="left:2388px;top:1614px;width:632px;height:100px;background:#dfdfdf;border-radius:8px;"></div>
<svg class="b" style="left:2679px;top:1659px;" width="26" height="30" viewBox="0 0 26 30" fill="none"><g fill="#a9a9a9" shape-rendering="crispEdges"><rect x="0" y="0" width="2" height="30"/><rect x="0" y="0" width="18" height="2"/><rect x="0" y="28" width="25" height="2"/><rect x="23" y="8" width="2" height="22"/><rect x="13" y="0" width="2" height="12"/><rect x="13" y="10" width="12" height="2"/><rect x="18" y="2" width="2" height="2"/><rect x="20" y="4" width="2" height="2"/><rect x="22" y="6" width="2" height="2"/><rect x="6" y="7" width="3" height="5"/><rect x="9" y="20" width="7" height="2"/><rect x="6" y="22" width="3" height="2"/><rect x="16" y="22" width="3" height="2"/></g></svg>
<span id="tog_ic" class="t d" style="left:2349.6px;top:843.74px;font-size:23px;color:#111111;">◀</span>
<span id="coach" class="t s" style="left:2447.8px;top:23.70px;font-size:28px;color:#f0a343;font-weight:700;letter-spacing:0.194px;">AI LeetCode Coach</span>
<span id="credits" class="t s" style="left:2412.6px;top:66.62px;font-size:21px;color:#f0a343;font-weight:700;letter-spacing:0.769px;">Credits: 3/5</span>
<span id="focus_ic" class="t d" style="left:2911.4px;top:47.84px;font-size:16.5px;color:#555555;">⊡</span>
<span id="focus" class="t s" style="left:2934.4px;top:42.98px;font-size:22px;color:#555555;-webkit-text-stroke:0.45px currentColor;letter-spacing:0.136px;">Focus</span>
<span id="timer" class="t m" style="left:2646.4px;top:143.19px;font-size:48px;color:#5dbb63;font-weight:700;">4:31</span>
<span id="pace" class="t m" style="left:2666.4px;top:210.48px;font-size:20px;color:#4f9f5b;">Good pace</span>
<span id="tab_quest" class="t s" style="left:2446.4px;top:275.18px;font-size:22px;color:#555555;font-weight:700;letter-spacing:0.328px;">Quest</span>
<span id="tab_pattern" class="t s" style="left:2584px;top:275.18px;font-size:22px;color:#555555;font-weight:700;letter-spacing:0.600px;">Pattern</span>
<span id="tab_hints" class="t s" style="left:2755.8px;top:275.18px;font-size:22px;color:#555555;font-weight:700;letter-spacing:0.280px;">Hints</span>
<span id="tab_review" class="t s" style="left:2906px;top:275.18px;font-size:22px;color:#f0a343;font-weight:700;letter-spacing:0.095px;">Review</span>
<span id="sqs" class="t s" style="left:2462px;top:513.87px;font-size:20px;color:#f0a343;font-weight:700;letter-spacing:1.443px;">SOLUTION QUALITY SCORER</span>
<span id="score_btn" class="t s" style="left:2598px;top:578.23px;font-size:23px;color:#0c0c0c;font-weight:700;letter-spacing:0.727px;">Score My Solution</span>
<span id="grade" class="t s" style="left:2432.6px;top:645.88px;font-size:24px;color:#d2d2d2;-webkit-text-stroke:0.45px currentColor;letter-spacing:0.408px;">Grade: A</span>
<span id="timec" class="t s" style="left:2432.6px;top:720.28px;font-size:24px;color:#d2d2d2;-webkit-text-stroke:0.45px currentColor;letter-spacing:0.657px;">Time complexity: O(n)</span>
<span id="spacec" class="t s" style="left:2432.6px;top:757.48px;font-size:24px;color:#d2d2d2;-webkit-text-stroke:0.45px currentColor;letter-spacing:0.599px;">Space complexity: O(n)</span>
<span id="body0" class="t s" style="left:2432.6px;top:831.88px;font-size:24px;color:#d2d2d2;-webkit-text-stroke:0.45px currentColor;letter-spacing:0.639px;">One key improvement is to consider edge</span>
<span id="body1" class="t s" style="left:2432.6px;top:869.08px;font-size:24px;color:#d2d2d2;-webkit-text-stroke:0.45px currentColor;letter-spacing:0.629px;">cases, such as an empty input array or a target</span>
<span id="body2" class="t s" style="left:2432.6px;top:906.28px;font-size:24px;color:#d2d2d2;-webkit-text-stroke:0.45px currentColor;letter-spacing:0.712px;">sum that cannot be achieved with the given</span>
<span id="body3" class="t s" style="left:2432.6px;top:943.48px;font-size:24px;color:#d2d2d2;-webkit-text-stroke:0.45px currentColor;letter-spacing:0.743px;">numbers. Currently, the function returns an</span>
<span id="body4" class="t s" style="left:2432.6px;top:980.68px;font-size:24px;color:#d2d2d2;-webkit-text-stroke:0.45px currentColor;letter-spacing:0.712px;">empty vector in such cases, but it may be</span>
<span id="body5" class="t s" style="left:2432.6px;top:1017.88px;font-size:24px;color:#d2d2d2;-webkit-text-stroke:0.45px currentColor;letter-spacing:0.695px;">beneficial to throw an exception or return a</span>
<span id="body6" class="t s" style="left:2432.6px;top:1055.08px;font-size:24px;color:#d2d2d2;-webkit-text-stroke:0.45px currentColor;letter-spacing:0.654px;">more informative error message to handle these</span>
<span id="body7" class="t s" style="left:2432.6px;top:1092.28px;font-size:24px;color:#d2d2d2;-webkit-text-stroke:0.45px currentColor;letter-spacing:0.648px;">scenarios more robustly.</span>
<span id="mock" class="t s" style="left:2462px;top:1195.47px;font-size:20px;color:#f0a343;font-weight:700;letter-spacing:1.400px;">MOCK INTERVIEWER</span>
<span id="mock_btn" class="t s" style="left:2590.8px;top:1259.83px;font-size:23px;color:#0c0c0c;font-weight:700;letter-spacing:0.823px;">Start Mock Session</span>
<span id="similar" class="t s" style="left:2462px;top:1377.07px;font-size:20px;color:#f0a343;font-weight:700;letter-spacing:1.267px;">SIMILAR PROBLEMS</span>
<span id="find_btn" class="t s" style="left:2635.8px;top:1443.93px;font-size:23px;color:#f0a343;font-weight:700;letter-spacing:0.497px;">Find Similar</span>
<span id="sysready" class="t s" style="left:2462px;top:1562.87px;font-size:20px;color:#5cb860;font-weight:700;letter-spacing:1.149px;">SYSTEM READY</span>
</aside>

</body></html>
